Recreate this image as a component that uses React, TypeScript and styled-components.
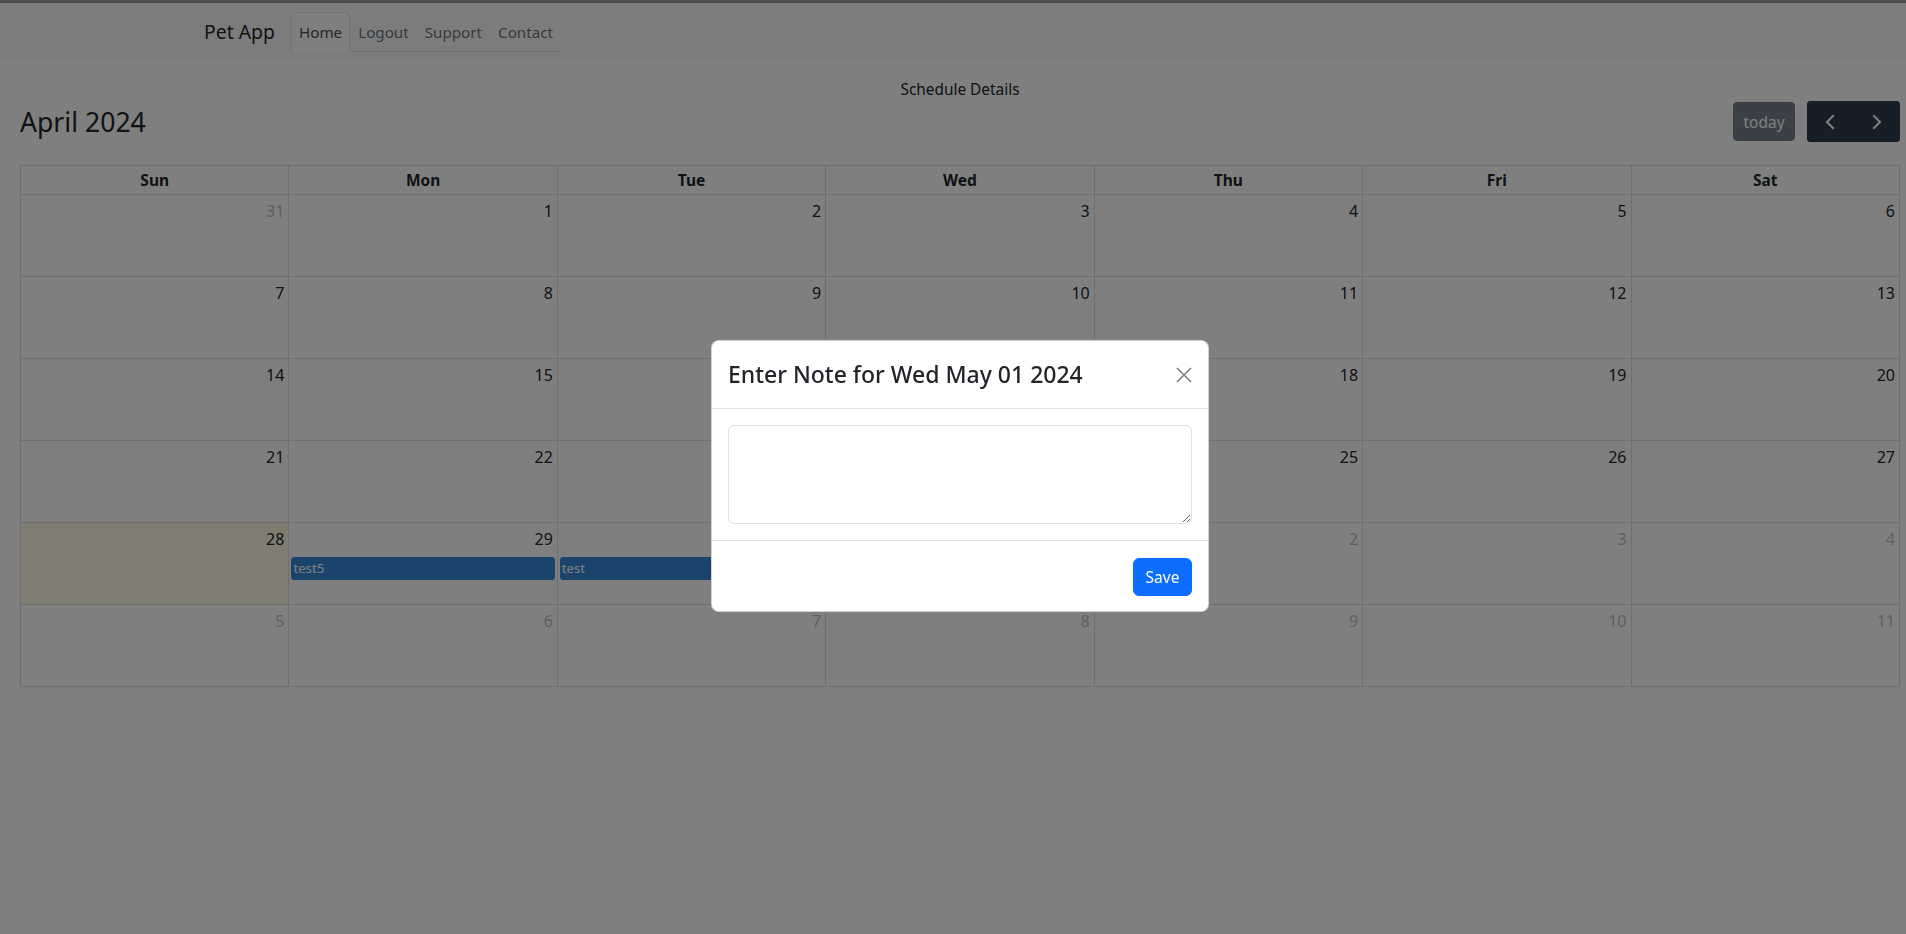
import React from "react";
import styled, { createGlobalStyle } from "styled-components";

const GlobalStyle = createGlobalStyle`
  html, body {
    margin: 0;
    padding: 0;
    overflow: hidden;
    background: #ffffff;
  }
  body {
    font-family: "Noto Sans", "Open Sans", sans-serif;
    font-size: 16px;
    line-height: 1.5;
    color: #212529;
  }
  * { box-sizing: border-box; }
`;

const Page = styled.div`
  width: 1920px;
  min-height: 934px;
`;

const Navbar = styled.nav`
  display: flex;
  align-items: center;
  height: 60px;
  padding: 0 0 0 204px;
  background: #f8f9fa;
  border-top: 3px solid #9a9a9a;
`;

const Brand = styled.a`
  font-size: 19.4px;
  line-height: 30px;
  padding: 5px 0;
  margin-right: 16px;
  color: #212529;
  text-decoration: none;
`;

const Tabs = styled.ul`
  display: flex;
  list-style: none;
  margin: 0;
  padding: 0;
  width: 271px;
  border-bottom: 1px solid #dee2e6;
  margin-top: 1px;
`;

const Tab = styled.li<{ $active?: boolean }>`
  margin-bottom: -1px;
  padding: 7px 7px;
  font-size: 15.2px;
  line-height: 24px;
  border: 1px solid ${(p) => (p.$active ? "#dee2e6" : "transparent")};
  border-bottom-color: ${(p) => (p.$active ? "#ffffff" : "transparent")};
  border-radius: 6px 6px 0 0;
  background: ${(p) => (p.$active ? "#ffffff" : "transparent")};
  color: ${(p) => (p.$active ? "#495057" : "rgba(33, 37, 41, 0.65)")};
`;

const Main = styled.main`
  padding: 0 20px;
`;

const Subtitle = styled.div`
  margin-top: 19px;
  text-align: center;
  font-size: 15.4px;
  line-height: 22px;
`;

const Toolbar = styled.div`
  display: flex;
  align-items: center;
  justify-content: space-between;
  height: 41px;
  margin-bottom: 23px;
`;

const Title = styled.h2`
  margin: 0;
  font-size: 26.6px;
  font-weight: 400;
  line-height: 34px;
`;

const ButtonRow = styled.div`
  display: flex;
  align-items: center;
  gap: 12px;
`;

const TodayButton = styled.button`
  height: 39px;
  width: 62px;
  padding: 0;
  font-family: inherit;
  font-size: 15.5px;
  color: #ffffff;
  background: #2c3e50;
  border: 1px solid #2c3e50;
  border-radius: 4px;
  opacity: 0.65;
`;

const NavGroup = styled.div`
  display: flex;
  border-radius: 4px;
  overflow: hidden;
`;

const NavButton = styled.button`
  width: 46.5px;
  height: 41px;
  padding: 0;
  display: flex;
  align-items: center;
  justify-content: center;
  background: #2c3e50;
  border: 1px solid #2c3e50;
  color: #ffffff;
`;

const Table = styled.table`
  width: 100%;
  border-collapse: collapse;
  table-layout: fixed;
`;

const HeadCell = styled.th`
  height: 29px;
  padding: 0 4px;
  border: 1px solid #dddddd;
  font-size: 15.5px;
  font-weight: 700;
  line-height: 24px;
  text-align: center;
`;

const DayCell = styled.td<{ $today?: boolean }>`
  height: 82px;
  padding: 0;
  border: 1px solid #dddddd;
  vertical-align: top;
  background: ${(p) => (p.$today ? "rgba(255, 220, 40, 0.15)" : "transparent")};
`;

const DayNumber = styled.div<{ $other?: boolean }>`
  padding: 4px;
  text-align: right;
  font-size: 16px;
  line-height: 24px;
  opacity: ${(p) => (p.$other ? 0.3 : 1)};
`;

const Event = styled.div`
  margin: 2px 2px 0;
  padding: 0 1px;
  height: 23px;
  font-size: 13.2px;
  line-height: 21px;
  color: #ffffff;
  background: #3788d8;
  border: 1px solid #3788d8;
  border-radius: 3px;
  white-space: nowrap;
  overflow: hidden;
`;

const Backdrop = styled.div`
  position: fixed;
  inset: 0;
  background: rgba(0, 0, 0, 0.5);
`;

const ModalLayer = styled.div`
  position: fixed;
  top: 0;
  left: 0;
  width: 1920px;
  height: 934px;
  display: flex;
  justify-content: center;
  align-items: flex-start;
  padding-top: 340px;
`;

const ModalContent = styled.div`
  width: 498px;
  background: #ffffff;
  border: 1px solid rgba(0, 0, 0, 0.175);
  border-radius: 8px;
`;

const ModalHeader = styled.div`
  display: flex;
  align-items: center;
  justify-content: space-between;
  padding: 16px;
  border-bottom: 1px solid #dee2e6;
`;

const ModalTitle = styled.h4`
  margin: 0;
  font-size: 23px;
  font-weight: 500;
  line-height: 35px;
  color: #212529;
`;

const CloseButton = styled.button`
  width: 16px;
  height: 16px;
  padding: 0;
  border: 0;
  background: transparent;
  opacity: 0.5;
  display: flex;
`;

const ModalBody = styled.div`
  padding: 16px;
`;

const NoteArea = styled.textarea`
  display: block;
  width: 100%;
  height: 99px;
  padding: 6px 12px;
  font-family: inherit;
  font-size: 16px;
  border: 1px solid #dee2e6;
  border-radius: 6px;
  resize: vertical;
  outline: none;
`;

const ModalFooter = styled.div`
  display: flex;
  justify-content: flex-end;
  padding: 13px 12px 11px;
  border-top: 1px solid #dee2e6;
`;

const SaveButton = styled.button`
  margin: 4px;
  width: 59px;
  height: 38px;
  padding: 0;
  font-family: inherit;
  font-size: 15.5px;
  color: #ffffff;
  background: #0d6efd;
  border: 1px solid #0d6efd;
  border-radius: 6px;
`;

type Day = { n: number; other?: boolean; today?: boolean; event?: string };

const weeks: Day[][] = [
  [{ n: 31, other: true }, { n: 1 }, { n: 2 }, { n: 3 }, { n: 4 }, { n: 5 }, { n: 6 }],
  [{ n: 7 }, { n: 8 }, { n: 9 }, { n: 10 }, { n: 11 }, { n: 12 }, { n: 13 }],
  [{ n: 14 }, { n: 15 }, { n: 16 }, { n: 17 }, { n: 18 }, { n: 19 }, { n: 20 }],
  [{ n: 21 }, { n: 22 }, { n: 23 }, { n: 24 }, { n: 25 }, { n: 26 }, { n: 27 }],
  [
    { n: 28, today: true },
    { n: 29, event: "test5" },
    { n: 30, event: "test" },
    { n: 1, other: true },
    { n: 2, other: true },
    { n: 3, other: true },
    { n: 4, other: true },
  ],
  [5, 6, 7, 8, 9, 10, 11].map((n) => ({ n, other: true })),
];

const dayNames = ["Sun", "Mon", "Tue", "Wed", "Thu", "Fri", "Sat"];

const Chevron = ({ dir }: { dir: "left" | "right" }) => (
  <svg width="12" height="16" viewBox="0 0 12 16" fill="none">
    <polyline
      points={dir === "left" ? "9,2 3,8 9,14" : "3,2 9,8 3,14"}
      stroke="currentColor"
      strokeWidth="2"
      strokeLinecap="square"
    />
  </svg>
);

export default function App() {
  return (
    <Page>
      <GlobalStyle />
      <Navbar>
        <Brand>Pet App</Brand>
        <Tabs>
          <Tab $active>Home</Tab>
          <Tab>Logout</Tab>
          <Tab>Support</Tab>
          <Tab>Contact</Tab>
        </Tabs>
      </Navbar>
      <Main>
        <Subtitle>Schedule Details</Subtitle>
        <Toolbar>
          <Title>April 2024</Title>
          <ButtonRow>
            <TodayButton disabled>today</TodayButton>
            <NavGroup>
              <NavButton aria-label="prev">
                <Chevron dir="left" />
              </NavButton>
              <NavButton aria-label="next">
                <Chevron dir="right" />
              </NavButton>
            </NavGroup>
          </ButtonRow>
        </Toolbar>
        <Table>
          <thead>
            <tr>
              {dayNames.map((d) => (
                <HeadCell key={d}>{d}</HeadCell>
              ))}
            </tr>
          </thead>
          <tbody>
            {weeks.map((w, i) => (
              <tr key={i}>
                {w.map((d, j) => (
                  <DayCell key={j} $today={d.today}>
                    <DayNumber $other={d.other}>{d.n}</DayNumber>
                    {d.event && <Event>{d.event}</Event>}
                  </DayCell>
                ))}
              </tr>
            ))}
          </tbody>
        </Table>
      </Main>
      <Backdrop />
      <ModalLayer>
        <ModalContent>
          <ModalHeader>
            <ModalTitle>Enter Note for Wed May 01 2024</ModalTitle>
            <CloseButton aria-label="close">
              <svg width="16" height="16" viewBox="0 0 16 16">
                <path d="M1 1 L15 15 M15 1 L1 15" stroke="#000" strokeWidth="1.6" />
              </svg>
            </CloseButton>
          </ModalHeader>
          <ModalBody>
            <NoteArea />
          </ModalBody>
          <ModalFooter>
            <SaveButton>Save</SaveButton>
          </ModalFooter>
        </ModalContent>
      </ModalLayer>
    </Page>
  );
}
